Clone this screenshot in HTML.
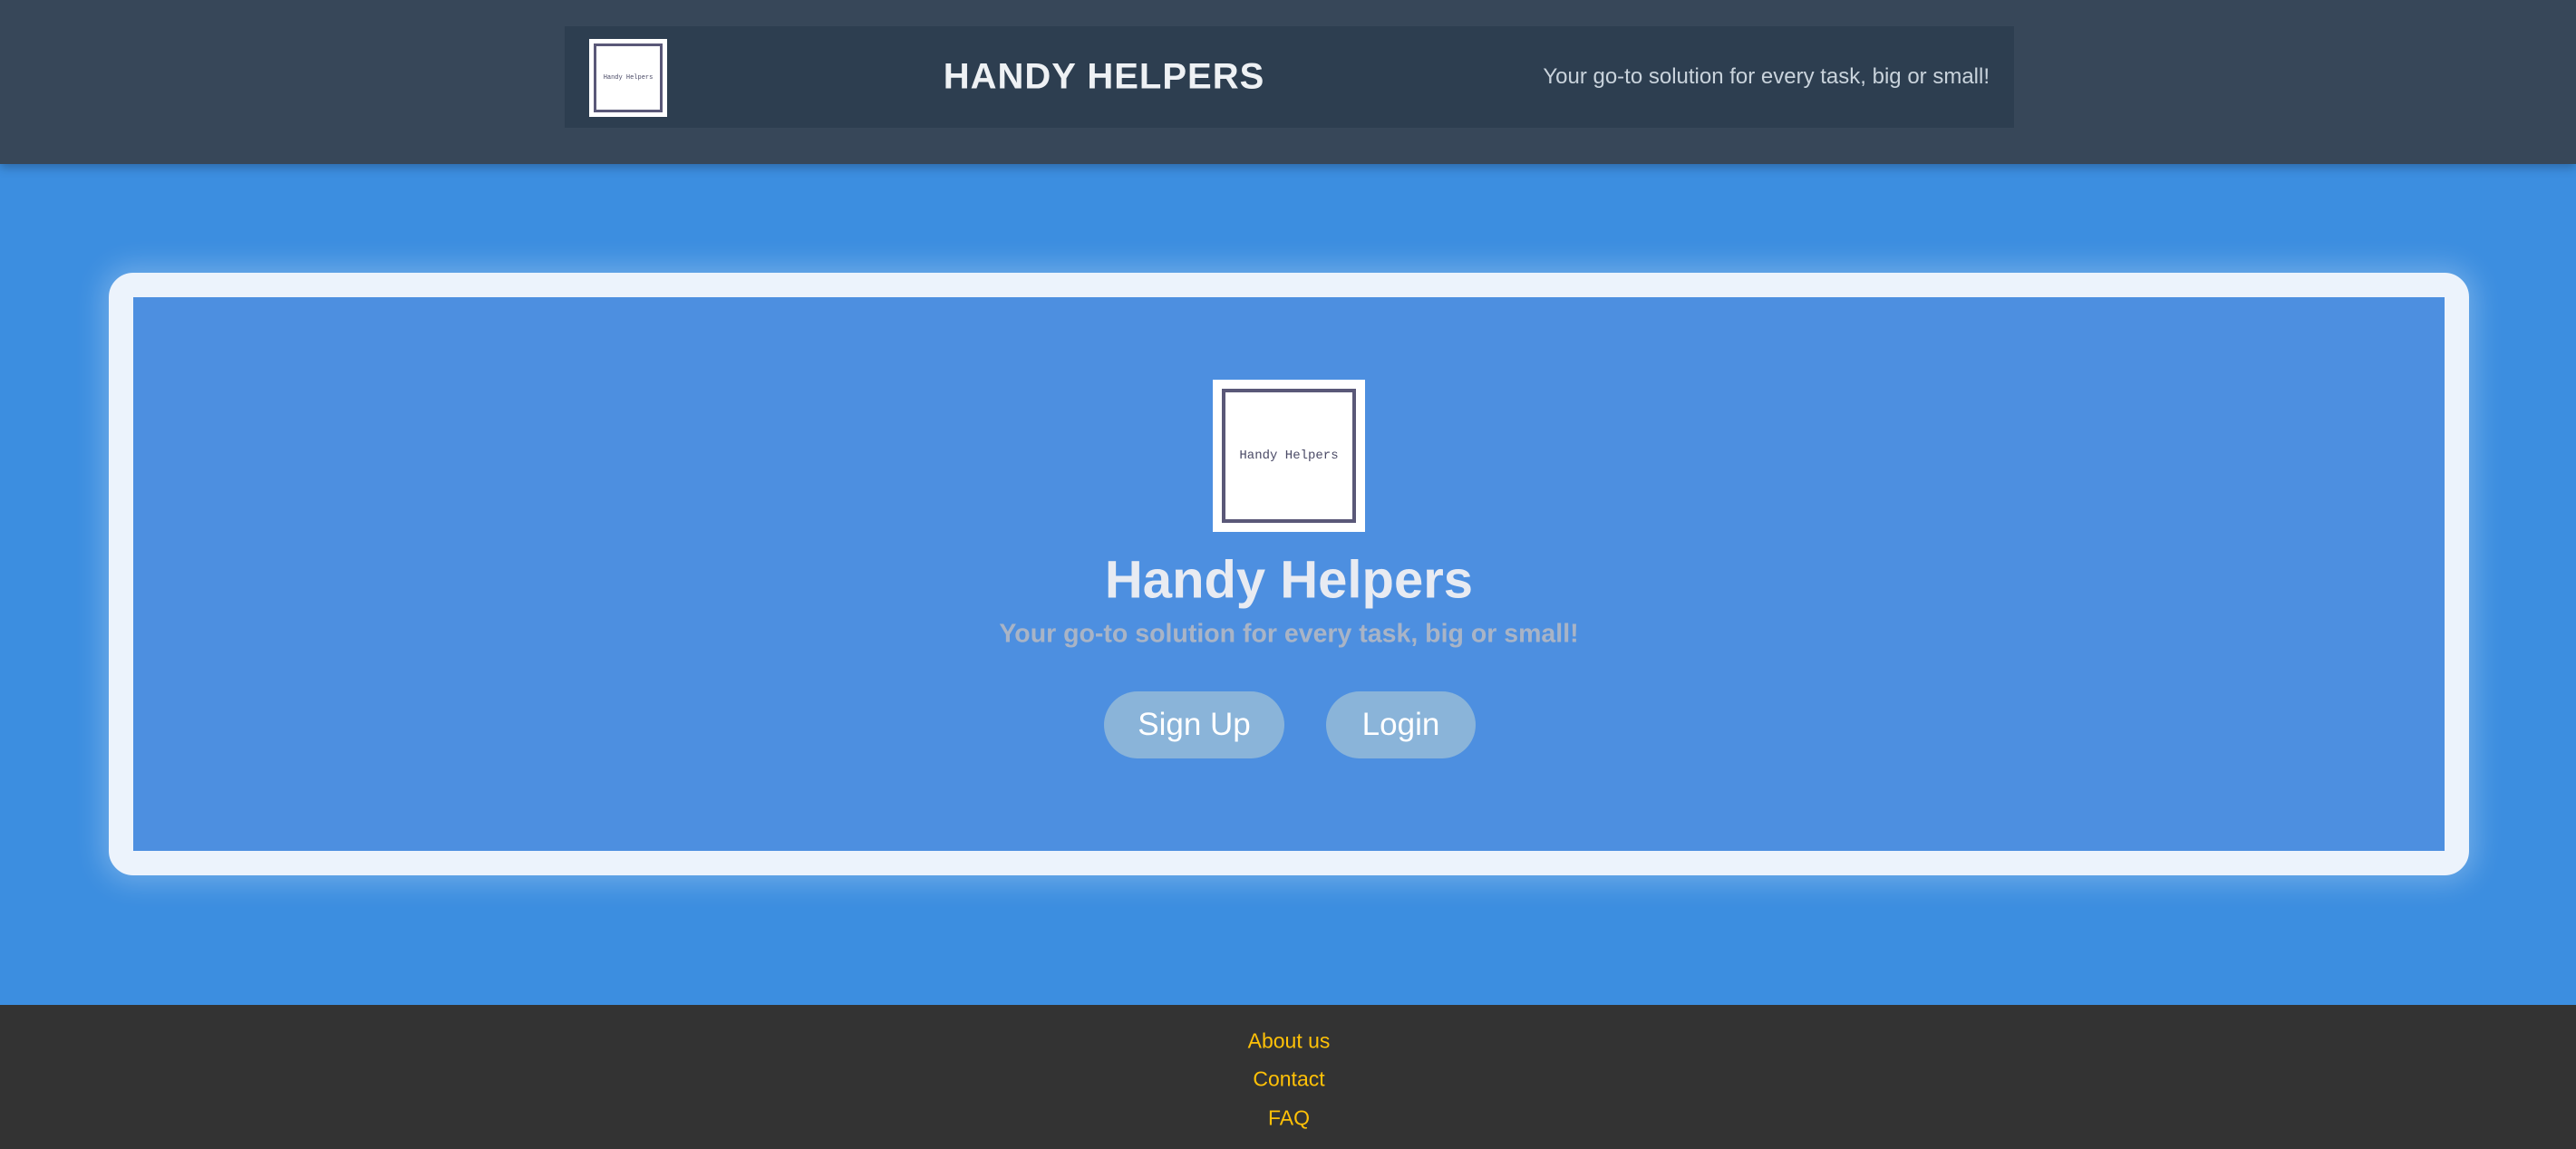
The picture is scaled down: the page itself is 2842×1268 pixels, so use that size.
<!DOCTYPE html>
<html><head><meta charset="utf-8"><style>
*{margin:0;padding:0;box-sizing:border-box}
body{width:2842px;height:1268px;overflow:hidden;background:#3c8ee0;font-family:"Liberation Sans",sans-serif;position:relative}
.hdr{position:absolute;left:0;top:0;width:2842px;height:181px;background:#374759;box-shadow:0 4px 10px rgba(0,0,0,.25)}
.bar{position:absolute;left:623px;top:29px;width:1599px;height:112px;background:#2d3e50}
.logo{position:absolute;background:#fff;display:flex;align-items:center;justify-content:center}
.logo .in{position:absolute;border:solid #5a5878}
.logo span{font-family:"Liberation Mono",monospace;color:#4a4a66;position:relative}
.ttl{position:absolute;left:1218px;top:85px;transform:translate(-50%,-50%);color:#eef1f4;font-weight:bold;font-size:40px;letter-spacing:1px;white-space:nowrap}
.tag{position:absolute;right:647px;top:85px;transform:translateY(-50%);color:#c9d3dc;font-size:24px;white-space:nowrap}
.card{position:absolute;left:120px;top:301px;width:2604px;height:665px;border:27px solid #ecf3fc;border-radius:27px;background:#4d8fe0;box-shadow:0 0 30px 8px rgba(255,255,255,.25)}
.h1{position:absolute;left:1422px;top:640px;transform:translate(-50%,-50%);color:#e8ebf2;font-weight:bold;font-size:58px;white-space:nowrap}
.sub{position:absolute;left:1422px;top:700px;transform:translate(-50%,-50%);color:#a9b4c6;font-weight:bold;font-size:28.5px;white-space:nowrap}
.btn{position:absolute;top:763px;height:74px;border-radius:37px;background:#8ab4d9;color:#fff;font-size:35px;display:flex;align-items:center;justify-content:center}
.ftr{position:absolute;left:0;top:1109px;width:2842px;height:159px;background:#333}
.ftr a{position:absolute;left:1422px;transform:translate(-50%,-50%);color:#ffc107;font-size:23px;text-decoration:none;white-space:nowrap}
</style></head><body>
<div class="hdr"><div class="bar"></div></div>
<div class="logo" style="left:650px;top:43px;width:86px;height:86px"><div class="in" style="left:5px;top:5px;right:5px;bottom:5px;border-width:3px"></div><span style="font-size:7px">Handy Helpers</span></div>
<div class="ttl">HANDY HELPERS</div>
<div class="tag">Your go-to solution for every task, big or small!</div>
<div class="card"></div>
<div class="logo" style="left:1338px;top:419px;width:168px;height:168px"><div class="in" style="left:10px;top:10px;right:10px;bottom:10px;border-width:4px"></div><span style="font-size:14px">Handy Helpers</span></div>
<div class="h1">Handy Helpers</div>
<div class="sub">Your go-to solution for every task, big or small!</div>
<div class="btn" style="left:1218px;width:199px">Sign Up</div>
<div class="btn" style="left:1463px;width:165px">Login</div>
<div class="ftr">
<a style="top:40px">About us</a>
<a style="top:82px">Contact</a>
<a style="top:125px">FAQ</a>
</div>
</body></html>
